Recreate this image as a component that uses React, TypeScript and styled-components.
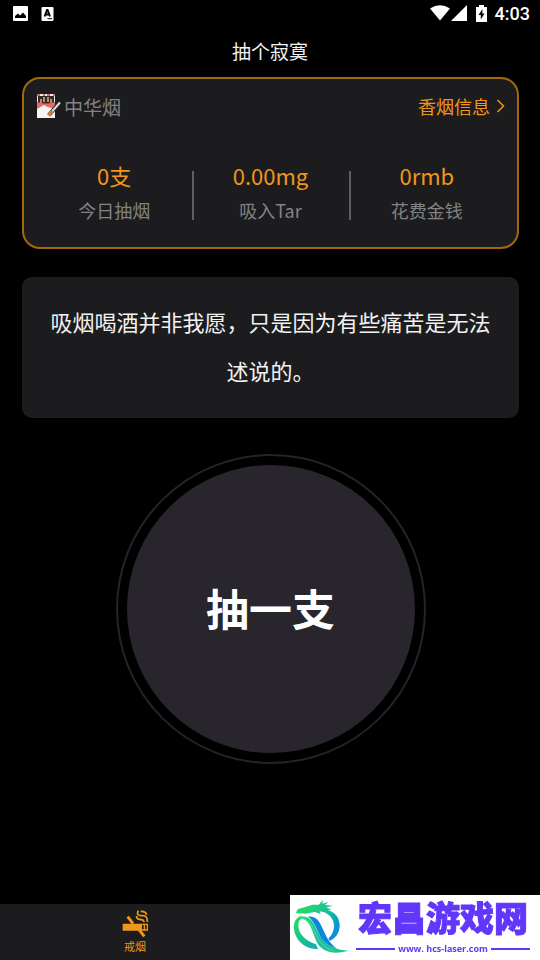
import React from "react";
import styled, { createGlobalStyle } from "styled-components";

const ORANGE = "#f0961c";
const PANEL = "#1c1c1e";
const MUTED = "#828285";
const VIOLET = "#6236fb";

const GlobalStyle = createGlobalStyle`
  * { box-sizing: border-box; }
  body {
    margin: 0;
    background: #000;
    color: #f2f2f2;
    font-family: "Noto Sans CJK SC", "Noto Sans", sans-serif;
  }
  button { font-family: inherit; border: 0; padding: 0; cursor: pointer; }
`;

const Page = styled.div`
  min-height: 100vh;
  display: flex;
  flex-direction: column;
`;

const StatusBar = styled.div`
  display: flex;
  align-items: center;
  justify-content: space-between;
  height: 26px;
  padding: 0 10px 0 12px;
`;

const StatusGroup = styled.div<{ $gap: number }>`
  display: flex;
  align-items: center;
  gap: ${(p) => p.$gap}px;
`;

const BatteryCell = styled.span`
  display: flex;
  margin-left: 8px;
`;

const Clock = styled.span`
  margin-left: 7px;
  padding-top: 2px;
  font: 500 18px/26px Roboto, sans-serif;
  color: #fff;
`;

const Title = styled.h1`
  margin: 0;
  padding: 11px 0 12px;
  font-size: 19px;
  line-height: 28px;
  font-weight: 400;
  text-align: center;
`;

const Main = styled.main`
  flex: 1;
  display: flex;
  flex-direction: column;
  padding: 0 21px 0 22px;
`;

const BrandCard = styled.section`
  border: 2px solid #a2670f;
  border-radius: 18px;
  background: ${PANEL};
  padding: 13px 12px 23px;
`;

const BrandHeader = styled.div`
  display: flex;
  align-items: center;
  justify-content: space-between;
  height: 28px;
`;

const Brand = styled.div`
  display: flex;
  align-items: center;
  gap: 3px;
  font-size: 19px;
  color: ${MUTED};
`;

const InfoLink = styled.a`
  display: flex;
  align-items: center;
  gap: 6px;
  font-size: 18px;
  color: ${ORANGE};
  text-decoration: none;
`;

const Stats = styled.div`
  display: grid;
  grid-template-columns: repeat(3, 1fr);
  margin-top: 38px;
`;

const Stat = styled.div`
  display: flex;
  flex-direction: column;
  align-items: center;
  position: relative;

  & + &::before {
    content: "";
    position: absolute;
    left: 0;
    top: 13px;
    width: 2px;
    height: 49px;
    background: #5e5e60;
  }
`;

const StatValue = styled.span`
  font-size: 22px;
  line-height: 34px;
  color: ${ORANGE};
`;

const StatLabel = styled.span`
  font-size: 18px;
  line-height: 28px;
  margin-top: 4px;
  color: ${MUTED};
`;

const Quote = styled.p`
  margin: 28px 0 0;
  padding: 20px 22px 23px;
  border-radius: 10px;
  background: ${PANEL};
  font-size: 22px;
  line-height: 49px;
  text-align: center;
`;

const SmokeButton = styled.button`
  align-self: center;
  width: 310px;
  height: 310px;
  margin: 36px 0;
  padding: 9px;
  border: 2px solid #242328;
  border-radius: 50%;
  background: transparent;
`;

const Disc = styled.span`
  display: grid;
  place-items: center;
  width: 100%;
  height: 100%;
  padding-bottom: 4px;
  border-radius: 50%;
  background: #28262c;
  color: #fff;
  font-size: 43px;
  font-weight: 700;
`;

const TabBar = styled.nav`
  display: grid;
  grid-template-columns: repeat(2, 1fr);
  height: 56px;
  background: ${PANEL};
`;

const Tab = styled.button`
  display: flex;
  flex-direction: column;
  align-items: center;
  padding-top: 5px;
  background: transparent;
  color: ${ORANGE};
  font-size: 11px;
  line-height: 18px;
`;

const Watermark = styled.aside`
  position: fixed;
  right: 0;
  bottom: 0;
  display: flex;
  gap: 6px;
  width: 250px;
  height: 65px;
  padding: 4px 10px 0 3px;
  background: #fff;
  color: ${VIOLET};
`;

const SiteText = styled.div`
  flex: 1;
  display: flex;
  flex-direction: column;
`;

const SiteName = styled.strong`
  font-size: 34px;
  line-height: 36px;
  font-weight: 900;
  text-align: center;
  white-space: nowrap;
  -webkit-text-stroke: 1px ${VIOLET};
`;

const SiteUrl = styled.div`
  display: flex;
  align-items: center;
  gap: 3px;
  margin-top: 8px;
  font: 700 9px/12px "Open Sans", sans-serif;
  white-space: nowrap;

  &::before,
  &::after {
    content: "";
    flex: 1;
    height: 2px;
    background: ${VIOLET};
  }
`;

const PictureIcon = () => (
  <svg width="16" height="16" viewBox="0 0 16 16" aria-hidden="true">
    <rect x="1" y="1" width="15" height="15" rx="1" fill="#fff" />
    <path d="M3 13V11L6 8.5 8 10.5 11 7.5 14 11v2z" fill="#000" />
  </svg>
);

const LetterIcon = () => (
  <svg width="13" height="15" viewBox="0 0 13 15" aria-hidden="true">
    <rect x="0.5" y="1" width="12" height="14" rx="1" fill="#fff" />
    <path d="M3.6 10.5 6 4h.6L9 10.5M4.7 8.5h3.3" fill="none" stroke="#000" strokeWidth="1.9" />
    <path d="M6.5 12.7h4.5" stroke="#000" />
  </svg>
);

const WifiIcon = () => (
  <svg width="20" height="16" viewBox="0 0 20 16" aria-hidden="true">
    <path d="M0 3.5Q10-3 20 3.5L10 15.5z" fill="#fff" />
  </svg>
);

const SignalIcon = () => (
  <svg width="16" height="16" viewBox="0 0 16 16" aria-hidden="true">
    <path d="M16 0v16H0z" fill="#fff" />
  </svg>
);

const BatteryIcon = () => (
  <svg width="11" height="17" viewBox="0 0 11 17" aria-hidden="true">
    <path d="M3 0h5v2h3v15H0V2h3z" fill="#fff" />
    <path d="M6.5 4 2.5 10h2.3v4.5L8.5 8.5H6.3z" fill="#000" />
  </svg>
);

const PackIcon = () => (
  <svg width="25" height="26" viewBox="0 0 25 26" aria-hidden="true">
    <path d="M1 1h18v11H1z" fill="#35282a" />
    <path d="M1 1h18v2H1z" fill="#c9696a" />
    <path d="M4 2h3M9 2h2M14 2h3" stroke="#f3e9e8" strokeWidth="2" />
    <path d="M1 3h1v6H1zM18 3h1v6h-1z" fill="#e8e8e8" />
    <path d="M5 6v4M8 4v5M12 4v5M15 6v4" stroke="#c78a50" strokeWidth="2" />
    <path d="M1 9q9 3 18 0v15H1z" fill="#e86b6c" />
    <path d="M1 16l7-4q5 4 11 3v10H1z" fill="#f7f4f4" />
    <path d="M24 9 13 22" stroke="#29292b" strokeWidth="4" />
    <path d="M24 9.5 16 18.5" stroke="#d9dcdd" strokeWidth="2" />
    <path d="M16 18.5 12.5 22.5" stroke="#c17e49" strokeWidth="4" />
  </svg>
);

const Chevron = () => (
  <svg width="9" height="14" viewBox="0 0 9 14" fill="none" aria-hidden="true">
    <path d="m1.5 1 6 6-6 6" stroke={ORANGE} strokeWidth="1.5" />
  </svg>
);

const QuitIcon = () => (
  <svg width="27" height="28" viewBox="66 42 81 84" fill="none" aria-hidden="true">
    <path d="M68 86h58v21H68zM126 86h18v4h-18zM126 103h18v4h-18zM131 86h4v21h-4zM140 86h4v21h-4z" fill={ORANGE} />
    <path d="M83 65 99 86M117 104 133 124" stroke={ORANGE} strokeWidth="9" />
    <path
      d="M115 47q-7 14 6 15h8q14 0 13 19M109 63q2 11 14 11 9 0 9 8M122 49q15-1 18 10"
      stroke={ORANGE}
      strokeWidth="5"
    />
  </svg>
);

const DragonLogo = () => (
  <svg width="57" height="55" viewBox="24 27 171 165" fill="none" aria-hidden="true">
    <defs>
      <linearGradient id="loop" x1="30" y1="80" x2="190" y2="186" gradientUnits="userSpaceOnUse">
        <stop stopColor="#22dc5c" />
        <stop offset="0.5" stopColor="#19bfa0" />
        <stop offset="1" stopColor="#20c888" />
      </linearGradient>
      <linearGradient id="crescent" x1="30" y1="90" x2="95" y2="180" gradientUnits="userSpaceOnUse">
        <stop stopColor="#22dc5c" />
        <stop offset="1" stopColor="#12a9bd" />
      </linearGradient>
      <linearGradient id="head" x1="60" y1="45" x2="155" y2="125" gradientUnits="userSpaceOnUse">
        <stop stopColor="#25dc64" />
        <stop offset="0.55" stopColor="#16bd9c" />
        <stop offset="1" stopColor="#0a8fdc" />
      </linearGradient>
    </defs>
    <path
      d="M32 70 38 58Q48 53 62 51L82 44 101 44 114 30 112 41 130 36 120 45 144 47 124 52 140 59 126 59Q164 70 164 108 163 138 135 153L130 146Q147 130 147 106 145 78 118 67L104 64 107 72 90 66 76 68 64 71 46 70Z"
      fill="url(#head)"
    />
    <path d="M68 79Q92 78 104 98C119 124 126 156 156 176Q125 168 108 144C95 119 88 93 68 79Z" fill="#0a86e0" />
    <path
      d="M44 79Q20 93 29 128 44 174 99 178L93 163Q43 145 40 108 40 84 54 87Z"
      fill="url(#crescent)"
    />
    <path d="M44 79Q73 75 88 104C105 139 119 178 191 182Q132 199 104 169C84 146 83 97 54 87Q46 82 44 79Z" fill="url(#loop)" />
    <path d="M48 83Q70 85 83 112C98 146 109 172 146 183" stroke="#d6f7ea" />
  </svg>
);

const stats = [
  { value: "0支", label: "今日抽烟" },
  { value: "0.00mg", label: "吸入Tar" },
  { value: "0rmb", label: "花费金钱" },
];

export default function App() {
  return (
    <Page>
      <GlobalStyle />
      <StatusBar>
        <StatusGroup $gap={13}>
          <PictureIcon />
          <LetterIcon />
        </StatusGroup>
        <StatusGroup $gap={1}>
          <WifiIcon />
          <SignalIcon />
          <BatteryCell>
            <BatteryIcon />
          </BatteryCell>
          <Clock>4:03</Clock>
        </StatusGroup>
      </StatusBar>
      <Title>抽个寂寞</Title>
      <Main>
        <BrandCard>
          <BrandHeader>
            <Brand>
              <PackIcon />
              <span>中华烟</span>
            </Brand>
            <InfoLink href="#info">
              香烟信息
              <Chevron />
            </InfoLink>
          </BrandHeader>
          <Stats>
            {stats.map((s) => (
              <Stat key={s.label}>
                <StatValue>{s.value}</StatValue>
                <StatLabel>{s.label}</StatLabel>
              </Stat>
            ))}
          </Stats>
        </BrandCard>
        <Quote>吸烟喝酒并非我愿，只是因为有些痛苦是无法述说的。</Quote>
        <SmokeButton type="button">
          <Disc>抽一支</Disc>
        </SmokeButton>
      </Main>
      <TabBar>
        <Tab type="button">
          <QuitIcon />
          戒烟
        </Tab>
      </TabBar>
      <Watermark>
        <DragonLogo />
        <SiteText>
          <SiteName>宏昌游戏网</SiteName>
          <SiteUrl>www. hcs-laser.com</SiteUrl>
        </SiteText>
      </Watermark>
    </Page>
  );
}
